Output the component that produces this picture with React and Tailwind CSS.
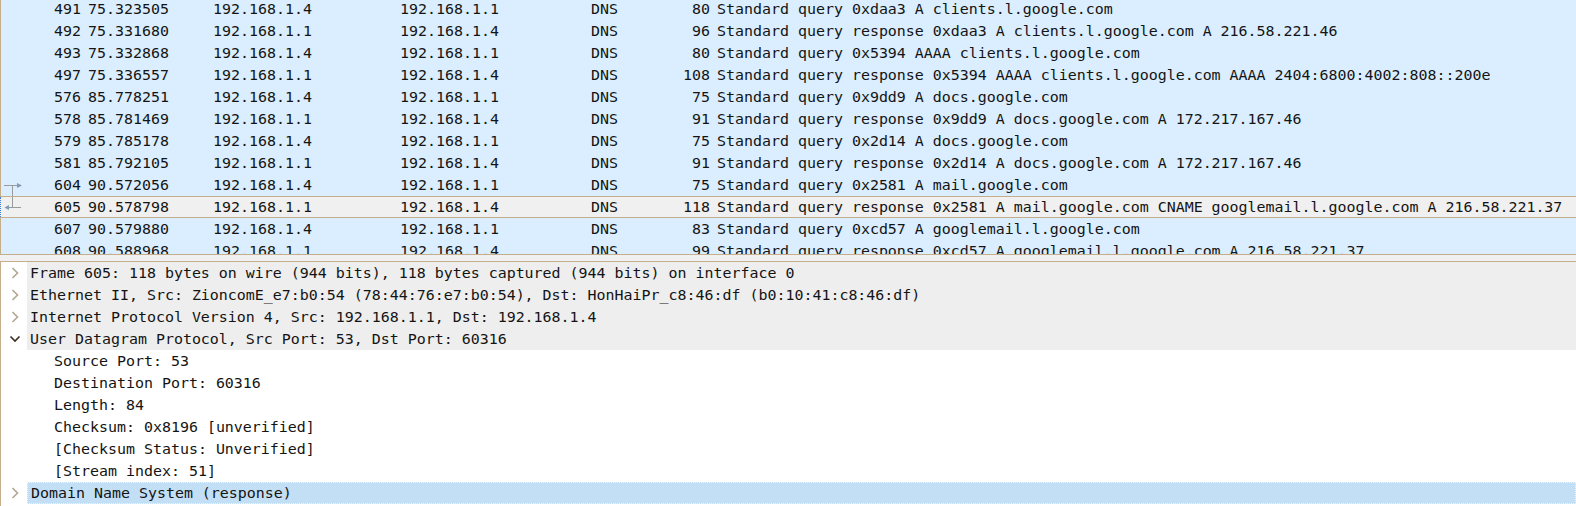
import React from "react";

const packets = [
  [491, "75.323505", "192.168.1.4", "192.168.1.1", "DNS", 80, "Standard query 0xdaa3 A clients.l.google.com"],
  [492, "75.331680", "192.168.1.1", "192.168.1.4", "DNS", 96, "Standard query response 0xdaa3 A clients.l.google.com A 216.58.221.46"],
  [493, "75.332868", "192.168.1.4", "192.168.1.1", "DNS", 80, "Standard query 0x5394 AAAA clients.l.google.com"],
  [497, "75.336557", "192.168.1.1", "192.168.1.4", "DNS", 108, "Standard query response 0x5394 AAAA clients.l.google.com AAAA 2404:6800:4002:808::200e"],
  [576, "85.778251", "192.168.1.4", "192.168.1.1", "DNS", 75, "Standard query 0x9dd9 A docs.google.com"],
  [578, "85.781469", "192.168.1.1", "192.168.1.4", "DNS", 91, "Standard query response 0x9dd9 A docs.google.com A 172.217.167.46"],
  [579, "85.785178", "192.168.1.4", "192.168.1.1", "DNS", 75, "Standard query 0x2d14 A docs.google.com"],
  [581, "85.792105", "192.168.1.1", "192.168.1.4", "DNS", 91, "Standard query response 0x2d14 A docs.google.com A 172.217.167.46"],
  [604, "90.572056", "192.168.1.4", "192.168.1.1", "DNS", 75, "Standard query 0x2581 A mail.google.com"],
  [605, "90.578798", "192.168.1.1", "192.168.1.4", "DNS", 118, "Standard query response 0x2581 A mail.google.com CNAME googlemail.l.google.com A 216.58.221.37"],
  [607, "90.579880", "192.168.1.4", "192.168.1.1", "DNS", 83, "Standard query 0xcd57 A googlemail.l.google.com"],
  [608, "90.588968", "192.168.1.1", "192.168.1.4", "DNS", 99, "Standard query response 0xcd57 A googlemail.l.google.com A 216.58.221.37"],
];

const details = [
  { kind: "top", text: "Frame 605: 118 bytes on wire (944 bits), 118 bytes captured (944 bits) on interface 0" },
  { kind: "top", text: "Ethernet II, Src: ZioncomE_e7:b0:54 (78:44:76:e7:b0:54), Dst: HonHaiPr_c8:46:df (b0:10:41:c8:46:df)" },
  { kind: "top", text: "Internet Protocol Version 4, Src: 192.168.1.1, Dst: 192.168.1.4" },
  { kind: "open", text: "User Datagram Protocol, Src Port: 53, Dst Port: 60316" },
  { kind: "child", text: "Source Port: 53" },
  { kind: "child", text: "Destination Port: 60316" },
  { kind: "child", text: "Length: 84" },
  { kind: "child", text: "Checksum: 0x8196 [unverified]" },
  { kind: "child", text: "[Checksum Status: Unverified]" },
  { kind: "child", text: "[Stream index: 51]" },
  { kind: "selected", text: "Domain Name System (response)" },
];

function Indicator({ no }) {
  if (no === 604) {
    return (
      <svg width="26" height="22" viewBox="0 0 26 22" className="block">
        <line x1="3" y1="11.5" x2="19" y2="11.5" stroke="#9a9a9a" strokeWidth="1" />
        <line x1="11.5" y1="11.5" x2="11.5" y2="22" stroke="#9a9a9a" strokeWidth="1" />
        <path d="M16 9 L21 11.5 L16 14 Z" fill="#7f9db7" />
      </svg>
    );
  }
  if (no === 605) {
    return (
      <svg width="26" height="20" viewBox="0 0 26 20" className="block">
        <line x1="11.5" y1="0" x2="11.5" y2="10.5" stroke="#9a9a9a" strokeWidth="1" />
        <line x1="5" y1="10.5" x2="20" y2="10.5" stroke="#9a9a9a" strokeWidth="1" />
        <path d="M8 8 L3.5 10.5 L8 13 Z" fill="#7f9db7" />
      </svg>
    );
  }
  return null;
}

function PacketRow({ p }) {
  const [no, time, src, dst, proto, len, info] = p;
  const selected = no === 605;
  return (
    <div
      className={
        "flex h-[22px] items-center whitespace-nowrap box-border " +
        (selected ? "bg-[#f0f0f0] border-y border-[#c4ae8c]" : "bg-[#daeeff]")
      }
    >
      <div
        className={
          "w-[27px] h-full flex items-center shrink-0 box-border border-l " +
          (selected ? "border-dotted border-[#3f7fd0]" : "border-[#c4ae8c]")
        }
      >
        <Indicator no={no} />
      </div>
      <div className="w-[61px] shrink-0 text-right pr-[7px]">{no}</div>
      <div className="w-[125px] shrink-0">{time}</div>
      <div className="w-[187px] shrink-0">{src}</div>
      <div className="w-[191px] shrink-0">{dst}</div>
      <div className="w-[60px] shrink-0">{proto}</div>
      <div className="w-[66px] shrink-0 text-right pr-[7px]">{len}</div>
      <div className="flex-1">{info}</div>
    </div>
  );
}

function Chevron({ open }) {
  if (open) {
    return (
      <svg width="12" height="8" viewBox="0 0 12 8" className="block">
        <path d="M1.5 1.5 L6 6 L10.5 1.5" fill="none" stroke="#3a2c20" strokeWidth="1.6" />
      </svg>
    );
  }
  return (
    <svg width="8" height="12" viewBox="0 0 8 12" className="block">
      <path d="M1.5 1 L6.5 6 L1.5 11" fill="none" stroke="#b2a592" strokeWidth="1.6" />
    </svg>
  );
}

function DetailRow({ d }) {
  if (d.kind === "child") {
    return (
      <div className="flex h-[22px] items-center whitespace-nowrap bg-white">
        <div className="pl-[53px]">{d.text}</div>
      </div>
    );
  }
  const open = d.kind === "open";
  const sel = d.kind === "selected";
  return (
    <div className="flex h-[22px] items-stretch whitespace-nowrap">
      <div className="w-[26px] shrink-0 flex items-center justify-center bg-white pl-[1px]">
        <Chevron open={open} />
      </div>
      <div
        className={
          "flex-1 flex items-center pl-[3px] box-border " +
          (sel ? "bg-[#c3dff5] border border-dotted border-[#eef6fd]" : "bg-[#eeeeee]")
        }
      >
        {d.text}
      </div>
    </div>
  );
}

export default function App() {
  return (
    <div
      className="w-[1576px] h-[506px] overflow-hidden flex flex-col bg-[#f0f0f0] text-[#141414] text-[14.95px] leading-[22px]"
      style={{ fontFamily: '"DejaVu Sans Mono", "Liberation Mono", monospace' }}
    >
      <div className="h-[255px] shrink-0 overflow-hidden border-b border-[#c4ae8c] bg-[#daeeff] box-border">
        <div className="-mt-[2px]">
          {packets.map((p) => (
            <PacketRow key={p[0]} p={p} />
          ))}
        </div>
      </div>
      <div className="h-[6px] shrink-0 bg-[#f0f0f0]" />
      <div className="flex-1 overflow-hidden border-t border-l border-[#c4ae8c] bg-white">
        {details.map((d, i) => (
          <DetailRow key={i} d={d} />
        ))}
      </div>
    </div>
  );
}
